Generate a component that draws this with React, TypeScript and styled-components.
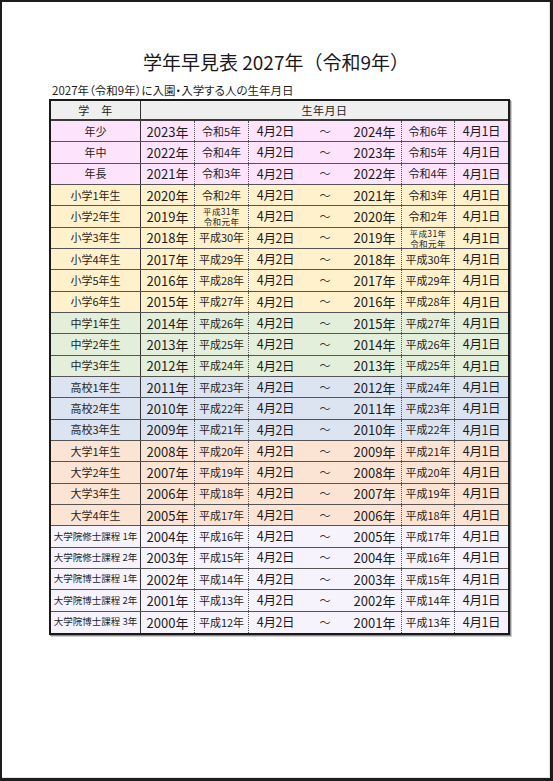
import React from 'react';
import styled, { createGlobalStyle } from 'styled-components';

const GlobalStyle = createGlobalStyle`
  html, body {
    margin: 0;
    padding: 0;
    background: #ffffff;
  }
  body {
    font-family: "Noto Sans CJK JP", "Noto Sans", sans-serif;
    color: #1e1e1e;
  }
`;

type Tone = 'pink' | 'cream' | 'green' | 'blue' | 'peach' | 'lavender';

const toneColors: Record<Tone, string> = {
  pink: '#fde3fb',
  cream: '#fff1cc',
  green: '#e3efda',
  blue: '#dce3f1',
  peach: '#fce4d4',
  lavender: '#f6f3fc',
};

const COLUMNS = '90px 54px 54px 53px 46px 54px 53px 53px';

const Page = styled.div`
  width: 553px;
  height: 781px;
  box-sizing: border-box;
  border-style: solid;
  border-color: #1c1c1c;
  border-width: 2px 3px 3px 2px;
  box-shadow: inset -1px -1px 0 #e4e4e4;
  display: flex;
  flex-direction: column;
  align-items: center;
  padding-top: 48px;
`;

const Title = styled.h1`
  margin: 0;
  font-size: 19px;
  line-height: 24px;
  font-weight: 400;
  color: #1a1a1a;
`;

const Sheet = styled.div`
  margin-left: 7px;
  margin-top: 9px;
  display: flex;
  flex-direction: column;
`;

const Caption = styled.div`
  font-size: 11.5px;
  line-height: 14px;
  padding-left: 3px;
  margin-bottom: 2px;
  font-feature-settings: "palt";
`;

const Table = styled.div`
  display: flex;
  flex-direction: column;
  border: 2px solid #1a1a1a;
  box-shadow: 1px 1px 0 #8c8c8c, 2px 2px 0 #cfcfcf;
`;

const HeaderRow = styled.div`
  display: grid;
  grid-template-columns: 90px 1fr;
  height: 20px;
  box-sizing: border-box;
  background: #efefef;
  border-bottom: 2px solid #3a3a3a;
`;

const Row = styled.div<{ $tone: Tone }>`
  display: grid;
  grid-template-columns: ${COLUMNS};
  height: 21.333px;
  box-sizing: border-box;
  background: ${(p) => toneColors[p.$tone]};
  border-bottom: 1px solid #555555;

  &:last-child {
    border-bottom: none;
  }
`;

type Divider = 'solid' | 'dotted' | 'none';

const Cell = styled.div<{ $divider?: Divider; $size?: number }>`
  display: flex;
  flex-direction: column;
  align-items: center;
  justify-content: center;
  font-size: ${(p) => p.$size ?? 13}px;
  line-height: 1;
  white-space: nowrap;
  border-right: ${(p) =>
    p.$divider === 'solid'
      ? '1px solid #333333'
      : p.$divider === 'dotted'
        ? '1px dotted #555555'
        : 'none'};
`;

const HeadCell = styled(Cell)`
  font-size: 11px;
  letter-spacing: 0.5px;
`;

const TwoLine = styled.span`
  display: block;
  font-size: 8.5px;
  line-height: 10px;
  letter-spacing: 0.4px;
  text-align: center;
`;

const DateText = styled.span`
  letter-spacing: -0.4px;
  font-size: 12.5px;
`;

const Tilde = styled.span`
  font-size: 11px;
  color: #333;
`;

type Grade = { name: string; year: number; tone: Tone; small?: boolean };

const grades: Grade[] = [
  { name: '年少', year: 2023, tone: 'pink' },
  { name: '年中', year: 2022, tone: 'pink' },
  { name: '年長', year: 2021, tone: 'pink' },
  { name: '小学1年生', year: 2020, tone: 'cream' },
  { name: '小学2年生', year: 2019, tone: 'cream' },
  { name: '小学3年生', year: 2018, tone: 'cream' },
  { name: '小学4年生', year: 2017, tone: 'cream' },
  { name: '小学5年生', year: 2016, tone: 'cream' },
  { name: '小学6年生', year: 2015, tone: 'cream' },
  { name: '中学1年生', year: 2014, tone: 'green' },
  { name: '中学2年生', year: 2013, tone: 'green' },
  { name: '中学3年生', year: 2012, tone: 'green' },
  { name: '高校1年生', year: 2011, tone: 'blue' },
  { name: '高校2年生', year: 2010, tone: 'blue' },
  { name: '高校3年生', year: 2009, tone: 'blue' },
  { name: '大学1年生', year: 2008, tone: 'peach' },
  { name: '大学2年生', year: 2007, tone: 'peach' },
  { name: '大学3年生', year: 2006, tone: 'peach' },
  { name: '大学4年生', year: 2005, tone: 'peach' },
  { name: '大学院修士課程 1年', year: 2004, tone: 'lavender', small: true },
  { name: '大学院修士課程 2年', year: 2003, tone: 'lavender', small: true },
  { name: '大学院博士課程 1年', year: 2002, tone: 'lavender', small: true },
  { name: '大学院博士課程 2年', year: 2001, tone: 'lavender', small: true },
  { name: '大学院博士課程 3年', year: 2000, tone: 'lavender', small: true },
];

function Wareki({ year }: { year: number }) {
  if (year === 2019) {
    return (
      <>
        <TwoLine>平成31年</TwoLine>
        <TwoLine>令和元年</TwoLine>
      </>
    );
  }
  if (year >= 2020) return <>令和{year - 2018}年</>;
  return <>平成{year - 1988}年</>;
}

export default function App() {
  return (
    <>
      <GlobalStyle />
      <Page>
        <Title>学年早見表 2027年（令和9年）</Title>
        <Sheet>
          <Caption>2027年（令和9年）に入園・入学する人の生年月日</Caption>
          <Table>
            <HeaderRow>
              <HeadCell $divider="solid">学　年</HeadCell>
              <HeadCell>生年月日</HeadCell>
            </HeaderRow>
            {grades.map((g) => (
              <Row key={g.name} $tone={g.tone}>
                <Cell $divider="solid" $size={g.small ? 9.5 : 11}>
                  {g.name}
                </Cell>
                <Cell $divider="dotted">{g.year}年</Cell>
                <Cell $divider="dotted" $size={11}>
                  <Wareki year={g.year} />
                </Cell>
                <Cell>
                  <DateText>4月2日</DateText>
                </Cell>
                <Cell>
                  <Tilde>～</Tilde>
                </Cell>
                <Cell $divider="dotted">{g.year + 1}年</Cell>
                <Cell $divider="dotted" $size={11}>
                  <Wareki year={g.year + 1} />
                </Cell>
                <Cell>
                  <DateText>4月1日</DateText>
                </Cell>
              </Row>
            ))}
          </Table>
        </Sheet>
      </Page>
    </>
  );
}
